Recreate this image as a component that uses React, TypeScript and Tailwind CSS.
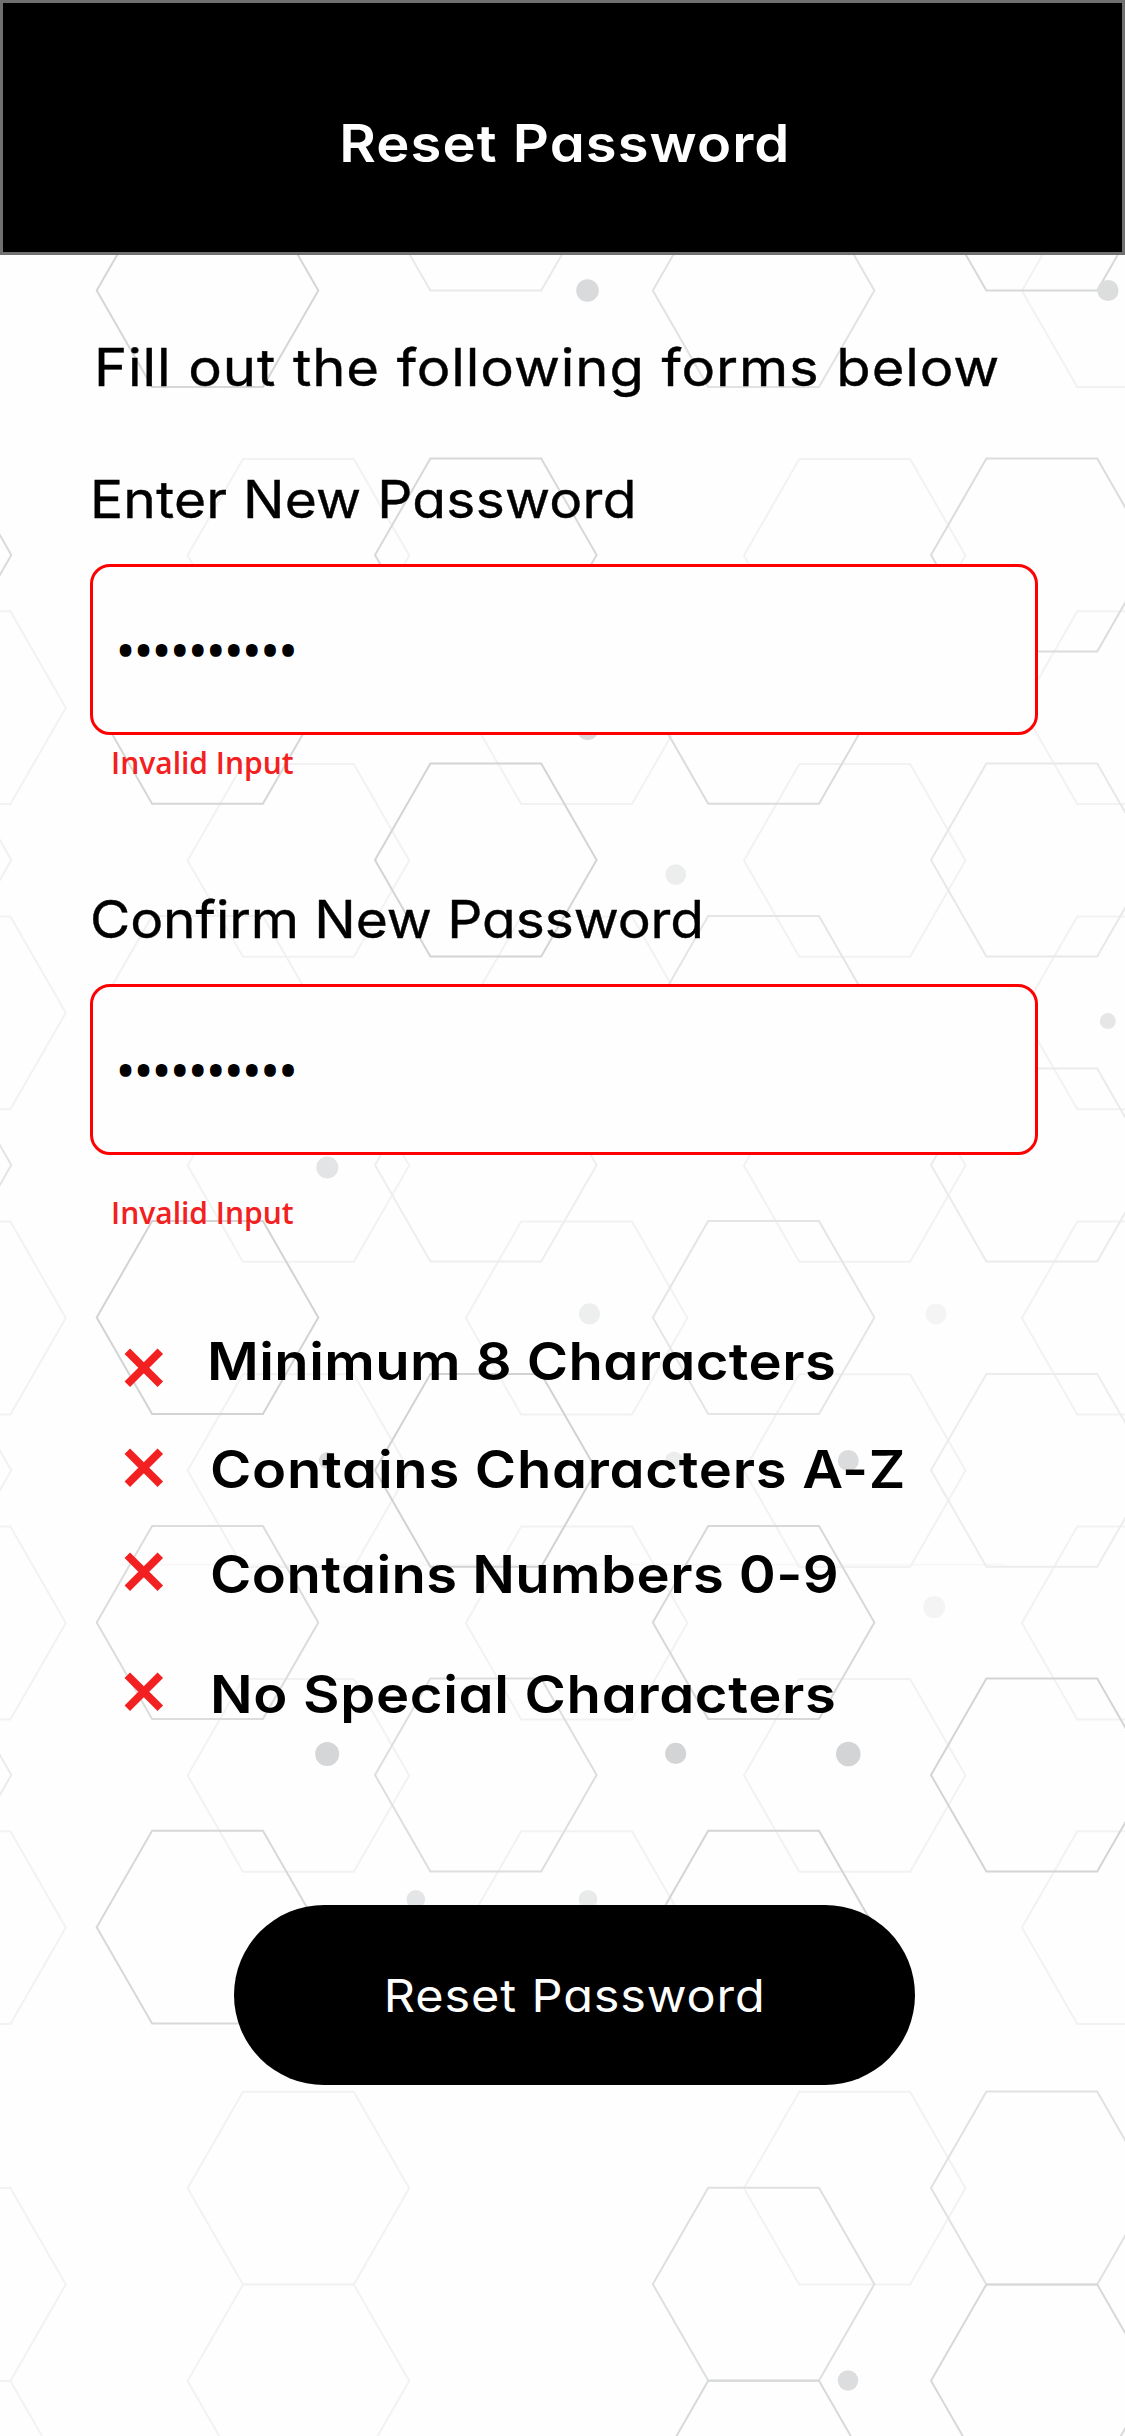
const INTER = "font-['Inter',sans-serif] [font-feature-settings:'cv11'] whitespace-nowrap";

type Shape = [number, number, string];

const FAINT = "#f2f2f2";

const hexagons: Shape[] = [
  // faint lattice
  [-45, 707.7, FAINT], [-45, 1012.8, FAINT], [-45, 1318, FAINT], [-45, 1623, FAINT],
  [-45, 1927.6, FAINT], [-45, 2284.5, FAINT], [-45, 2477.3, FAINT],
  [298.4, 555.4, FAINT], [298.4, 860.4, FAINT], [298.4, 1165.4, FAINT], [298.4, 1470.6, FAINT],
  [298.4, 1775.4, FAINT], [298.4, 2188.2, FAINT], [298.4, 2381, FAINT],
  [576.6, 707.7, FAINT], [576.6, 1012.8, FAINT], [576.6, 1318, FAINT], [576.6, 1623, FAINT], [576.6, 1927.6, FAINT],
  [854.7, 555.4, FAINT], [854.7, 860.4, FAINT], [854.7, 1165.4, FAINT], [854.7, 1470.6, FAINT],
  [854.7, 1775.4, FAINT], [854.7, 2188.2, FAINT],
  [1132.7, 290.7, FAINT], [1132.7, 707.7, FAINT], [1132.7, 1012.8, FAINT], [1132.7, 1318, FAINT],
  [1132.7, 1623, FAINT], [1132.7, 1927.6, FAINT],
  // darker lattice
  [-99.5, 555, "#dadada"], [-99.5, 860, "#f0f0f0"], [-99.5, 1165, "#e4e4e4"], [-99.5, 1470.3, "#f1f1f1"], [-99.5, 1775, "#ebebeb"],
  [207.5, 290.5, "#d6d6d6"], [207.5, 707.3, "#d6d6d6"], [207.5, 1012.5, "#f1f1f1"], [207.5, 1317.5, "#d3d3d3"],
  [207.5, 1622.5, "#dcdcdc"], [207.5, 1927.2, "#d8d8d8"],
  [485.8, 194.2, "#e9e9e9"], [485.8, 555, "#d8d8d8"], [485.8, 860, "#d4d4d4"], [485.8, 1165, "#eeeeee"],
  [485.8, 1470.3, "#d2d2d2"], [485.8, 1775, "#dedede"],
  [763.6, 290.5, "#e2e2e2"], [763.6, 707.3, "#dbdbdb"], [763.6, 1012.5, "#e5e5e5"], [763.6, 1317.5, "#e5e5e5"],
  [763.6, 1622.5, "#d8d8d8"], [763.6, 1927.2, "#d4d4d4"], [763.6, 2284.2, "#dedfdf"], [763.6, 2477.2, "#d8d9d9"],
  [1041.8, 194.2, "#d7d8d8"], [1041.8, 555, "#dcdcdc"], [1041.8, 860, "#e8e8e8"], [1041.8, 1165, "#ebebeb"],
  [1041.8, 1470.3, "#ededed"], [1041.8, 1775, "#d4d4d4"], [1041.8, 2188, "#e1e1e1"], [1041.8, 2380.8, "#d8d8d8"],
];

const dots: [number, number, number, string][] = [
  [587.5, 290.5, 11.3, "#d9dadb"], [1108, 290.5, 10.6, "#dcdddd"], [587.7, 729, 11, "#dadada"],
  [675.7, 874.6, 10.4, "#eceeed"], [1107.8, 1021.1, 8, "#e6e6e6"], [327.3, 1167.5, 11, "#e3e4e6"],
  [589.5, 1313.9, 10.6, "#edefee"], [936.1, 1313.9, 10.5, "#f4f4f4"], [327.3, 1460.5, 8.6, "#dddddd"],
  [674, 1460.5, 9, "#eceeed"], [848.3, 1460.5, 10.5, "#dbdcde"], [934.2, 1607.1, 11, "#f4f4f4"],
  [327.2, 1754, 12, "#d5d6d8"], [675.7, 1753.4, 10.6, "#d3d4d6"], [848.3, 1754, 12.3, "#d3d4d6"],
  [415.8, 1899.3, 9.3, "#e4e5e6"], [588, 1899.3, 9.3, "#e9ebea"], [848, 2380.5, 10.3, "#dcdddf"],
];

function HexBackground() {
  return (
    <svg className="absolute inset-0" width="1125" height="2436" viewBox="0 0 1125 2436" fill="none" aria-hidden="true">
      <path d="M120 1564.7H1005" stroke="#f8f8f8" strokeWidth="2" />
      {hexagons.map(([x, y, color], i) => (
        <path
          key={i}
          d={`M${x - 55.4} ${y - 96.4}h110.8l55.4 96.4l-55.4 96.4h-110.8l-55.4 -96.4z`}
          stroke={color}
          strokeWidth="2"
        />
      ))}
      {dots.map(([x, y, r, color], i) => (
        <circle key={i} cx={x} cy={y} r={r} fill={color} />
      ))}
    </svg>
  );
}

function PasswordField({ className }: { className: string }) {
  return (
    <div className={`ml-[90px] flex h-[171px] w-[948px] items-center rounded-[20px] border-[3px] border-[#ff0000] bg-[#fefefe] pt-[1px] pl-[23.5px] ${className}`}>
      <span className="font-['Open_Sans',sans-serif] text-[48px] leading-none [-webkit-text-stroke:1.6px_black]">••••••••••</span>
    </div>
  );
}

function ErrorText({ className }: { className: string }) {
  return (
    <p className={`ml-[111px] font-['Open_Sans',sans-serif] text-[30px] leading-[40px] font-semibold text-[#f22020] ${className}`}>
      Invalid Input
    </p>
  );
}

function CrossIcon({ className }: { className: string }) {
  return (
    <svg className={`shrink-0 ${className}`} width="40" height="40" viewBox="0 0 40 40" fill="none" stroke="#f22020" strokeWidth="7.8">
      <path d="M3.3 3.3L36.3 36.3M36.3 3.3L3.3 36.3" />
    </svg>
  );
}

const rules = [
  { text: "Minimum 8 Characters", row: "mt-[99px] gap-[43px]", icon: "mt-[16px]", tracking: "tracking-[0.4px]" },
  { text: "Contains Characters A-Z", row: "mt-[48px] gap-[46px]", icon: "mt-[7.5px]", tracking: "tracking-[0.67px]" },
  { text: "Contains Numbers 0-9", row: "mt-[45px] gap-[46px]", icon: "mt-[7px]", tracking: "tracking-[0.4px]" },
  { text: "No Special Characters", row: "mt-[60px] gap-[46px]", icon: "mt-[7px]", tracking: "tracking-[0.63px]" },
];

export default function App() {
  return (
    <div className="relative h-[2436px] w-[1125px] overflow-hidden bg-[#fefefe] text-black">
      <HexBackground />
      <div className="relative flex flex-col items-start">
        <header className="flex h-[255px] w-full justify-center border-[3px] border-[#707070] bg-black pt-[111px]">
          <h1 className={`${INTER} ml-[5px] scale-x-[1.08] text-[52px] leading-[60px] font-semibold tracking-[0.98px] text-white`}>Reset Password</h1>
        </header>

        <p className={`${INTER} mt-[83px] ml-[93.5px] origin-left scale-x-[1.08] text-[52px] leading-[60px] tracking-[0.84px] [-webkit-text-stroke:0.4px_black]`}>
          Fill out the following forms below
        </p>

        <label className={`${INTER} mt-[72px] ml-[89.5px] origin-left scale-x-[1.06] text-[52px] leading-[60px] tracking-[0.22px] [-webkit-text-stroke:0.4px_black]`}>
          Enter New Password
        </label>
        <PasswordField className="mt-[34px]" />
        <ErrorText className="mt-[8px]" />

        <label className={`${INTER} mt-[107px] ml-[90px] origin-left scale-x-[1.06] text-[52px] leading-[60px] tracking-[-0.09px] [-webkit-text-stroke:0.4px_black]`}>
          Confirm New Password
        </label>
        <PasswordField className="mt-[34px]" />
        <ErrorText className="mt-[38px]" />

        <ul className="ml-[124px]">
          {rules.map((rule) => (
            <li key={rule.text} className={`flex items-start ${rule.row}`}>
              <CrossIcon className={rule.icon} />
              <span className={`${INTER} origin-left scale-x-[1.08] text-[52px] leading-[60px] font-semibold ${rule.tracking}`}>{rule.text}</span>
            </li>
          ))}
        </ul>

        <button className="mt-[180px] ml-[234px] flex h-[180px] w-[681px] items-center justify-center rounded-[90px] bg-black pt-[2px] text-white">
          <span className={`${INTER} scale-x-[1.08] text-[45px] leading-[60px] tracking-[0.8px]`}>Reset Password</span>
        </button>
      </div>
    </div>
  );
}
